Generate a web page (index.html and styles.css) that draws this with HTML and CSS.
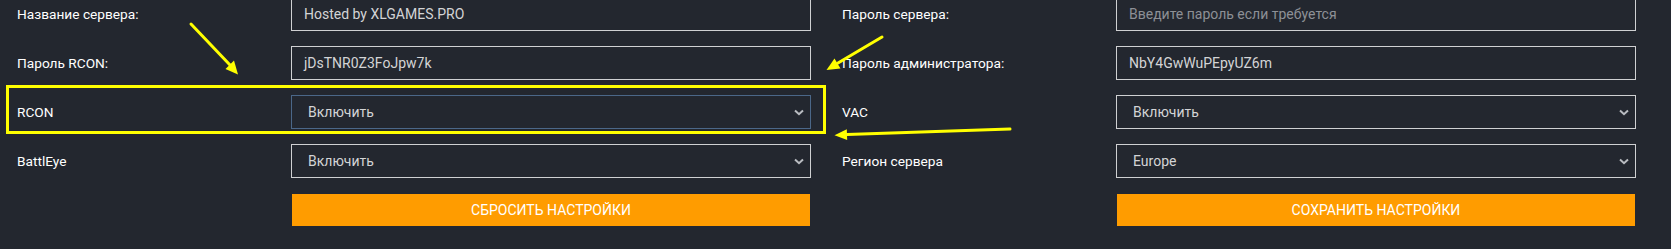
FILE: index.html
```html
<!DOCTYPE html>
<html lang="ru">
<head>
<meta charset="utf-8">
<title>Настройки сервера</title>
<link rel="stylesheet" href="styles.css">
</head>
<body>
<div class="page">
  <div class="form">
    <div class="col">
      <div class="row">
        <label class="label">Название сервера:</label>
        <div class="field">Hosted by XLGAMES.PRO</div>
      </div>
      <div class="row">
        <label class="label">Пароль RCON:</label>
        <div class="field">jDsTNR0Z3FoJpw7k</div>
      </div>
      <div class="row">
        <label class="label">RCON</label>
        <div class="field select focus"><span>Включить</span><svg class="chev" width="10" height="7" viewBox="0 0 10 7"><path d="M1 1.5 L5 5.2 L9 1.5" fill="none" stroke="#b9bcc1" stroke-width="2"/></svg></div>
      </div>
      <div class="row">
        <label class="label">BattlEye</label>
        <div class="field select"><span>Включить</span><svg class="chev" width="10" height="7" viewBox="0 0 10 7"><path d="M1 1.5 L5 5.2 L9 1.5" fill="none" stroke="#b9bcc1" stroke-width="2"/></svg></div>
      </div>
      <div class="row btn-row">
        <span></span>
        <button class="btn">СБРОСИТЬ НАСТРОЙКИ</button>
      </div>
    </div>
    <div class="col">
      <div class="row">
        <label class="label">Пароль сервера:</label>
        <div class="field placeholder">Введите пароль если требуется</div>
      </div>
      <div class="row">
        <label class="label">Пароль администратора:</label>
        <div class="field">NbY4GwWuPEpyUZ6m</div>
      </div>
      <div class="row">
        <label class="label">VAC</label>
        <div class="field select"><span>Включить</span><svg class="chev" width="10" height="7" viewBox="0 0 10 7"><path d="M1 1.5 L5 5.2 L9 1.5" fill="none" stroke="#b9bcc1" stroke-width="2"/></svg></div>
      </div>
      <div class="row">
        <label class="label">Регион сервера</label>
        <div class="field select"><span>Europe</span><svg class="chev" width="10" height="7" viewBox="0 0 10 7"><path d="M1 1.5 L5 5.2 L9 1.5" fill="none" stroke="#b9bcc1" stroke-width="2"/></svg></div>
      </div>
      <div class="row btn-row">
        <span></span>
        <button class="btn">СОХРАНИТЬ НАСТРОЙКИ</button>
      </div>
    </div>
  </div>
  <div class="highlight"></div>
  <svg class="arrows" width="1671" height="249" viewBox="0 0 1671 249">
    <g stroke="#ffff00" stroke-width="3" stroke-linecap="round" fill="none">
      <line x1="191" y1="27" x2="230" y2="68"/>
      <line x1="882" y1="40" x2="838" y2="66"/>
      <line x1="1010" y1="132" x2="847" y2="137.5"/>
    </g>
    <g fill="#ffff00">
      <polygon points="238,77.5 225.5,72 234,63.5"/>
      <polygon points="826.5,73 834.5,61.5 840.5,71.5"/>
      <polygon points="834.5,138.3 847.2,143 846.8,132.3"/>
    </g>
  </svg>
</div>
</body>
</html>
```
FILE: styles.css
```css
* { box-sizing: border-box; }
html, body {
  margin: 0;
  padding: 0;
  background: #23272f;
  overflow: hidden;
}
body {
  font-family: Roboto, "Noto Sans", Arial, sans-serif;
  font-size: 14px;
  color: #ffffff;
}
.page {
  position: relative;
  width: 1671px;
  height: 249px;
}
.form {
  display: grid;
  grid-template-columns: 794px 794px;
  column-gap: 31px;
  padding-left: 17px;
  margin-top: -3px;
}
.col {
  display: flex;
  flex-direction: column;
  gap: 15px;
}
.row {
  display: grid;
  grid-template-columns: 274px 520px;
  align-items: center;
  height: 34px;
}
.label {
  color: #ffffff;
  font-size: 13.7px;
  line-height: 20px;
}
.field {
  height: 34px;
  border: 1px solid #cfd0d2;
  padding: 0 12px;
  display: flex;
  align-items: center;
  color: #d3d4d6;
  font-size: 14px;
  background: #23272f;
}
.placeholder { color: #8d9096; }
.select {
  padding: 0 6px 0 16px;
  justify-content: space-between;
}
.select.focus { border-color: #4b6788; }
.chev { display: block; }
.btn-row {
  height: 32px;
  margin-top: 1px;
}
.btn {
  height: 32px;
  margin: 0 1px;
  border: 0;
  background: #ff9c00;
  color: #ffffff;
  font-family: Roboto, "Noto Sans", Arial, sans-serif;
  font-size: 14px;
  padding: 0;
}
.highlight {
  position: absolute;
  left: 6px;
  top: 88px;
  width: 820px;
  height: 49px;
  border: 3px solid #ffff00;
  pointer-events: none;
}
.arrows {
  position: absolute;
  left: 0;
  top: 0;
  pointer-events: none;
}
```
